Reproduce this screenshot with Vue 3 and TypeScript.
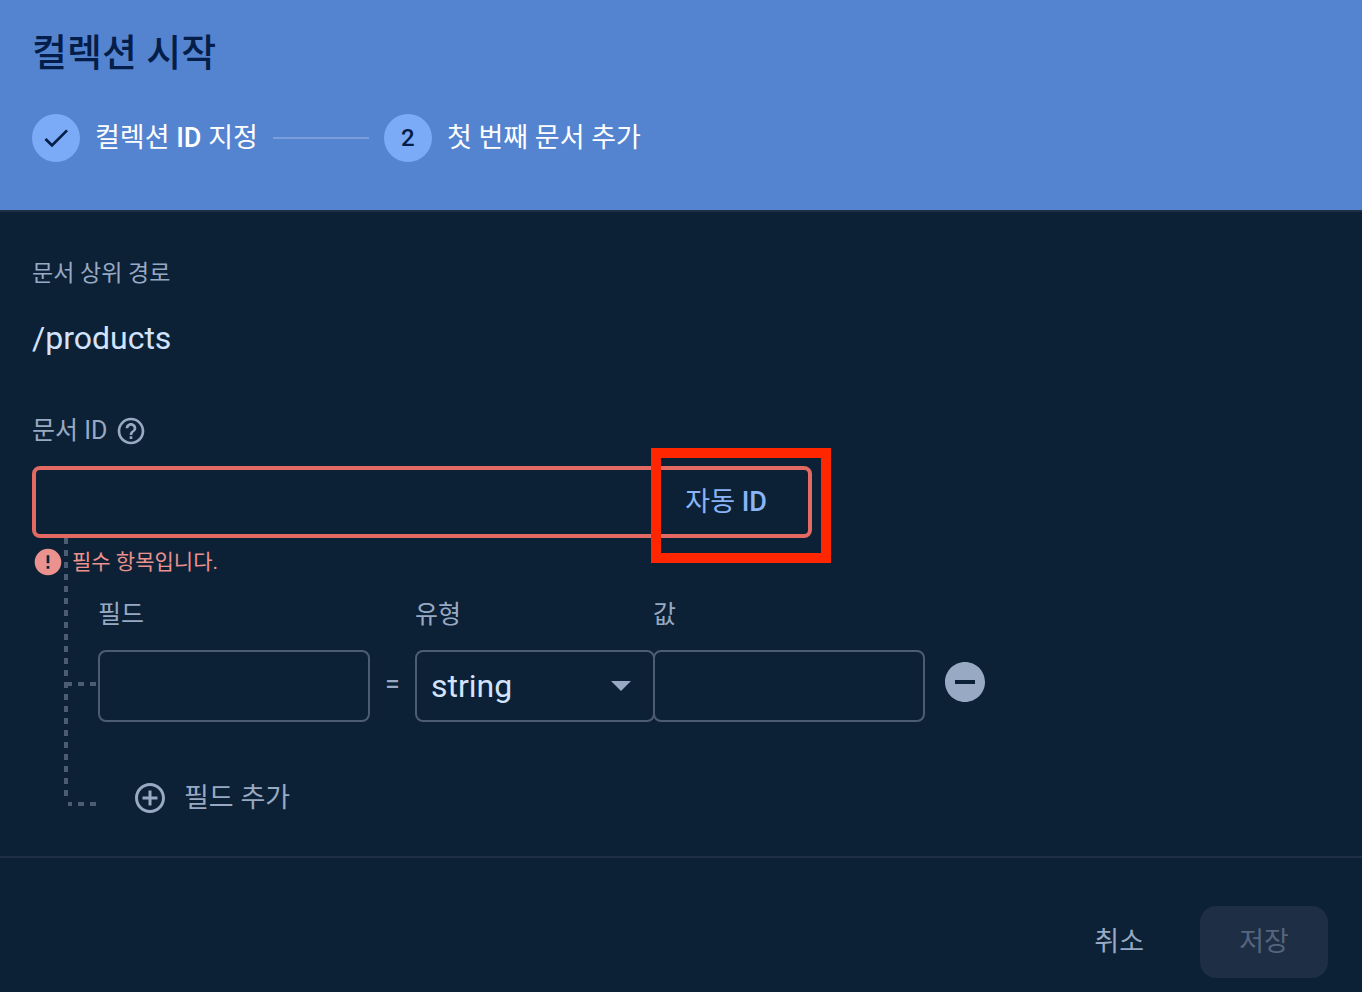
<script setup lang="ts">
import { ref } from 'vue'

const documentId = ref('')
const fieldName = ref('')
const fieldType = ref('string')
const fieldValue = ref('')
const types: string[] = ['string', 'number', 'boolean', 'map', 'array', 'null', 'timestamp', 'geopoint', 'reference']
</script>

<template>
  <form class="dialog" @submit.prevent>
    <header class="head">
      <h1 class="title">컬렉션 시작</h1>
      <ol class="steps">
        <li class="step">
          <span class="bubble">
            <svg width="32" height="32" viewBox="0 0 24 24" aria-hidden="true">
              <path d="M9 16.17 4.83 12l-1.42 1.41L9 19 21 7l-1.41-1.41z" fill="currentColor" />
            </svg>
          </span>
          <span>컬렉션 <b>ID</b> 지정</span>
        </li>
        <li class="rule" aria-hidden="true"></li>
        <li class="step">
          <span class="bubble">2</span>
          <span>첫 번째 문서 추가</span>
        </li>
      </ol>
    </header>

    <main class="body">
      <div class="label small">문서 상위 경로</div>
      <div class="path">/products</div>

      <div class="label id-label">
        <label for="doc-id">문서 ID</label>
        <svg width="32" height="32" viewBox="0 0 24 24" aria-hidden="true">
          <path
            d="M11 18h2v-2h-2v2zm1-16C6.48 2 2 6.48 2 12s4.48 10 10 10 10-4.48 10-10S17.52 2 12 2zm0 18c-4.41 0-8-3.59-8-8s3.59-8 8-8 8 3.59 8 8-3.59 8-8 8zm0-14c-2.21 0-4 1.79-4 4h2c0-1.1.9-2 2-2s2 .9 2 2c0 2-3 1.75-3 5h2c0-2.25 3-2.5 3-5 0-2.21-1.79-4-4-4z"
            fill="currentColor"
          />
        </svg>
      </div>
      <div class="id-box">
        <input id="doc-id" v-model="documentId" type="text" aria-describedby="doc-error" />
        <button type="button" class="auto">자동 <b>ID</b></button>
        <span class="marker" aria-hidden="true"></span>
      </div>

      <div class="tree">
        <div id="doc-error" class="error">
          <svg width="32" height="32" viewBox="0 0 24 24" aria-hidden="true">
            <path
              d="M12 2C6.48 2 2 6.48 2 12s4.48 10 10 10 10-4.48 10-10S17.52 2 12 2zm1 15h-2v-2h2v2zm0-4h-2V7h2v6z"
              fill="currentColor"
            />
          </svg>
          <span>필수 항목입니다.</span>
        </div>

        <div class="fields">
          <div class="field">
            <label class="label" for="name">필드</label>
            <input id="name" v-model="fieldName" class="box" type="text" />
          </div>
          <span class="equals">=</span>
          <div class="field type">
            <label class="label" for="type">유형</label>
            <div class="select">
              <select id="type" v-model="fieldType" class="box">
                <option v-for="t in types" :key="t" :value="t">{{ t }}</option>
              </select>
              <svg class="arrow" width="20" height="10" viewBox="0 0 20 10" aria-hidden="true">
                <path d="M0 0h20L10 10z" fill="currentColor" />
              </svg>
            </div>
          </div>
          <div class="field value">
            <label class="label" for="value">값</label>
            <input id="value" v-model="fieldValue" class="box" type="text" />
          </div>
          <button type="button" class="remove" aria-label="필드 삭제">
            <svg width="48" height="48" viewBox="0 0 24 24" aria-hidden="true">
              <path
                d="M12 2C6.48 2 2 6.48 2 12s4.48 10 10 10 10-4.48 10-10S17.52 2 12 2zm5 11H7v-2h10v2z"
                fill="currentColor"
              />
            </svg>
          </button>
          <span class="branch" aria-hidden="true"></span>
        </div>

        <button type="button" class="add">
          <svg width="36" height="36" viewBox="0 0 24 24" aria-hidden="true">
            <path
              d="M13 7h-2v4H7v2h4v4h2v-4h4v-2h-4V7zm-1-5C6.48 2 2 6.48 2 12s4.48 10 10 10 10-4.48 10-10S17.52 2 12 2zm0 18c-4.41 0-8-3.59-8-8s3.59-8 8-8 8 3.59 8 8-3.59 8-8 8z"
              fill="currentColor"
            />
          </svg>
          <span>필드 추가</span>
        </button>
        <span class="trunk" aria-hidden="true"></span>
        <span class="branch last" aria-hidden="true"></span>
      </div>
    </main>

    <footer class="foot">
      <button type="button" class="action">취소</button>
      <button type="submit" class="action save" disabled>저장</button>
    </footer>
  </form>
</template>

<style>
html,
body {
  margin: 0;
  background: #0c2135;
}
</style>

<style scoped>
.dialog,
.dialog * {
  box-sizing: border-box;
}
.dialog {
  font-family: Roboto, 'Noto Sans CJK KR', sans-serif;
  font-size: 27px;
  line-height: 32px;
  color: #98a9c3;
  background: #0c2135;
}
svg {
  display: block;
  flex: none;
}
b {
  font-weight: 500;
}
button,
input,
select {
  font: inherit;
  color: inherit;
  margin: 0;
  padding: 0;
  border: 0;
  background: none;
  outline: none;
}
.head {
  padding: 29px 32px 48px;
  background: #5484d0;
}
.title {
  margin: 0 0 37px;
  font-size: 38px;
  line-height: 48px;
  font-weight: 500;
  color: #041e49;
}
.steps {
  display: flex;
  align-items: center;
  gap: 15px;
  margin: 0;
  padding: 0;
  list-style: none;
}
.step {
  display: flex;
  align-items: center;
  gap: 15px;
  color: #fff;
}
.bubble {
  display: flex;
  align-items: center;
  justify-content: center;
  width: 48px;
  height: 48px;
  border-radius: 50%;
  background: #7baaf7;
  color: #041e49;
  font-size: 24px;
  font-weight: 500;
}
.rule {
  width: 96px;
  height: 2px;
  background: #7a9fdc;
}
.body {
  padding: 46px 32px 40px;
  border-top: 2px solid #1f2f45;
  border-bottom: 2px solid #1f2f45;
}
.label {
  font-size: 25px;
}
.small {
  font-size: 23px;
}
.path {
  margin-top: 24px;
  font-size: 32px;
  line-height: 48px;
  color: #d3e3fd;
}
.id-label {
  display: flex;
  align-items: center;
  gap: 8px;
  margin-top: 53px;
}
.id-box {
  position: relative;
  display: flex;
  max-width: 780px;
  height: 72px;
  margin-top: 19px;
  border: 4px solid #e46962;
  border-radius: 8px;
}
.id-box input {
  flex: 1;
  min-width: 0;
  padding: 0 12px;
  color: #d3e3fd;
}
.auto {
  padding: 0 41px 0 24px;
  color: #8ab4f8;
}
.marker {
  position: absolute;
  top: -22px;
  right: -23px;
  width: 180px;
  height: 115px;
  border: 10px solid #ff2600;
  pointer-events: none;
}
.tree {
  position: relative;
  padding-top: 8px;
}
.error {
  display: flex;
  align-items: center;
  gap: 8px;
  font-size: 21px;
  color: #ec928e;
}
.fields {
  position: relative;
  display: flex;
  align-items: flex-end;
  margin: 21px 0 0 66px;
}
.field {
  display: flex;
  flex-direction: column;
  gap: 19px;
  flex: 0 1 272px;
  min-width: 0;
}
.type {
  flex-basis: 240px;
}
.value {
  margin-left: -2px;
}
.box {
  display: block;
  width: 100%;
  height: 72px;
  padding: 0 14px;
  border: 2px solid #4c5c74;
  border-radius: 8px;
  font-size: 32px;
  line-height: 48px;
  color: #d3e3fd;
  appearance: none;
}
.box option {
  background: #0c2135;
}
.select {
  position: relative;
}
.arrow {
  position: absolute;
  right: 24px;
  top: 31px;
  pointer-events: none;
}
.equals {
  flex: none;
  width: 45px;
  height: 72px;
  line-height: 68px;
  text-align: center;
  font-size: 27px;
}
.remove {
  flex: none;
  height: 72px;
  padding: 0 0 8px;
  margin-left: 16px;
}
.add {
  display: flex;
  align-items: center;
  gap: 16px;
  margin: 58px 0 0 100px;
}
.trunk {
  position: absolute;
  left: 32px;
  top: 0;
  bottom: 20px;
  width: 4px;
  background: repeating-linear-gradient(#4c5c74 0 6px, transparent 6px 12px);
}
.branch {
  position: absolute;
  left: -30px;
  bottom: 36px;
  width: 28px;
  height: 4px;
  background: repeating-linear-gradient(to left, #4c5c74 0 6px, transparent 6px 12px);
}
.last {
  left: 36px;
  bottom: 10px;
}
.foot {
  display: flex;
  justify-content: flex-end;
  gap: 24px;
  padding: 48px 34px 14px;
}
.action {
  height: 72px;
  padding: 0 32px;
  border-radius: 16px;
}
.save {
  width: 128px;
  background: #1e2e45;
  color: #55657d;
}
</style>
